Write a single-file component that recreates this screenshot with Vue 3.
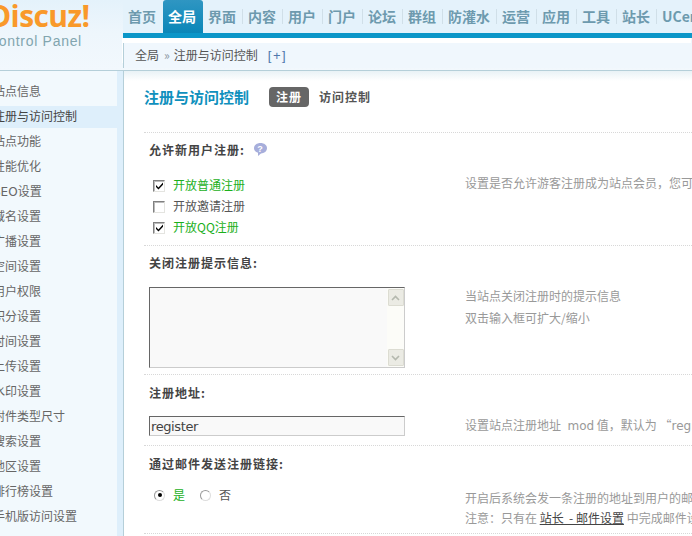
<script setup>
const navItems = ['首页', '全局', '界面', '内容', '用户', '门户', '论坛', '群组', '防灌水', '运营', '应用', '工具', '站长', 'UCenter']
const menu = ['站点信息', '注册与访问控制', '站点功能', '性能优化', 'SEO设置', '域名设置', '广播设置', '空间设置', '用户权限', '积分设置', '时间设置', '上传设置', '水印设置', '附件类型尺寸', '搜索设置', '地区设置', '排行榜设置', '手机版访问设置']
const checks = [
  { label: '开放普通注册', on: true },
  { label: '开放邀请注册', on: false },
  { label: '开放QQ注册', on: true }
]
</script>

<template>
  <div class="page">
    <header class="top">
      <div class="logo">
        <div class="brand">Discuz!</div>
        <div class="sub">Control Panel</div>
      </div>
      <div class="topright">
        <nav class="nav">
          <a v-for="(n, i) in navItems" :key="n" class="navitem" :class="{ active: i === 1, sep: i > 1 && i < 13 }">{{ n }}</a>
        </nav>
        <div class="rule"></div>
        <div class="crumbs">
          <span>全局</span><span class="raquo">»</span><span>注册与访问控制</span><span class="plus">[+]</span>
        </div>
      </div>
    </header>

    <div class="body">
      <aside class="side">
        <ul class="menu">
          <li v-for="(m, i) in menu" :key="m" :class="{ cur: i === 1 }">{{ m }}</li>
        </ul>
      </aside>

      <main class="main">
        <div class="head">
          <h1>注册与访问控制</h1>
          <span class="pill">注册</span>
          <span class="tab2">访问控制</span>
        </div>

        <section class="group g1">
          <div class="label">允许新用户注册:
            <svg class="help" width="15" height="15" viewBox="0 0 15 15">
              <path d="M7.500 1C11.200 1 14 3.200 14 6.200c0 3-2.800 5.200-6 5.200l-3 2.600v-3.200C2.400 9.800 1 8.200 1 6.200 1 3.200 3.800 1 7.500 1z" fill="#a7aedb" />
              <text x="7.500" y="9.500" text-anchor="middle" class="q">?</text>
            </svg>
          </div>
          <div class="line">
            <div class="opts">
              <div v-for="c in checks" :key="c.label" class="opt" :class="{ on: c.on }">
                <span class="cb">
                  <svg v-if="c.on" width="9" height="9" viewBox="0 0 9 9"><path d="M1 4l2.500 2.500L8 1.500v2.300L3.500 8.500 1 6z" fill="#000" /></svg>
                </span>
                <span>{{ c.label }}</span>
              </div>
            </div>
            <div class="tip t1">设置是否允许游客注册成为站点会员，您可以根据站点需要进行设置</div>
          </div>
        </section>

        <section class="group g2">
          <div class="label">关闭注册提示信息:</div>
          <div class="line">
            <div class="ta">
              <div class="sb">
                <span class="sbtn"><svg width="9" height="6" viewBox="0 0 9 6"><path d="M1 5l3.500-3.500L8 5" fill="none" stroke="#b4b8ae" stroke-width="1.600" /></svg></span>
                <span class="sbtn"><svg width="9" height="6" viewBox="0 0 9 6"><path d="M1 1l3.500 3.500L8 1" fill="none" stroke="#b4b8ae" stroke-width="1.600" /></svg></span>
              </div>
            </div>
            <div class="tip t2">
              <div>当站点关闭注册时的提示信息</div>
              <div>双击输入框可扩大/缩小</div>
            </div>
          </div>
        </section>

        <section class="group g3">
          <div class="label">注册地址:</div>
          <div class="line">
            <div class="inp">register</div>
            <div class="tip t3">设置站点注册地址 <span class="lat">&nbsp;mod</span> 值，默认为 “<span class="lat">register</span>”</div>
          </div>
        </section>

        <section class="group g4">
          <div class="label">通过邮件发送注册链接:</div>
          <div class="line">
            <div class="radios">
              <span class="rd"><i class="dot"></i></span><span class="yes">是</span>
              <span class="rd r2"></span><span>否</span>
            </div>
            <div class="tip t4">
              <div>开启后系统会发一条注册的地址到用户的邮箱</div>
              <div>注意：只有在 <a class="link">站长&nbsp;&nbsp;-&nbsp;邮件设置</a> 中完成邮件设置后才有效</div>
            </div>
          </div>
        </section>
      </main>
    </div>
  </div>
</template>

<style>
html, body { margin: 0; padding: 0; background: #fff; overflow: hidden; }
</style>

<style scoped>
.page {
  width: 692px;
  height: 536px;
  overflow: hidden;
  font: 12px/1.2 "Noto Sans CJK SC", "Liberation Sans", sans-serif;
  color: #555;
  background: #fff;
}
.top {
  display: grid;
  grid-template-columns: 123px 1fr;
  height: 70px;
  border-bottom: 1px solid #b5cfd9;
  background: linear-gradient(#e4f2fb, #eef6fc 33px, #f2f8fd);
  box-sizing: content-box;
}
.logo { overflow: hidden; height: 70px; }
.brand {
  margin: -1px 0 0 -11px;
  font: bold 30px/34px "Open Sans", "Liberation Sans", sans-serif;
  letter-spacing: -0.600px;
  color: #f9992a;
}
.sub {
  margin: 0 0 0 -12px;
  font: 14px/17px "Liberation Sans", sans-serif;
  letter-spacing: 0.700px;
  color: #82a5af;
}
.topright { min-width: 0; }
.nav {
  display: flex;
  height: 33px;
  white-space: nowrap;
  background: #e4f2fb;
}
.navitem {
  padding: 0 7px 0 5px;
  font: bold 14px/33px "Noto Sans CJK SC", "Liberation Sans", sans-serif;
  color: #6d9aae;
}
.navitem.sep {
  background: linear-gradient(#d0dfe8, #d0dfe8) right 9px / 1px 15px no-repeat;
}
.navitem.active {
  color: #fff;
  background: linear-gradient(#2f96c2, #0a86b8);
  border-radius: 3px 3px 0 0;
}
.rule { height: 5px; background: #0b96c8; }
.crumbs {
  display: flex;
  align-items: center;
  height: 25px;
  margin-top: 5px;
  padding-left: 11px;
  background: #f0f7fd;
  border-left: 1px solid #b5cfd9;
  box-shadow: -1px -5px 0 0 #fff;
  color: #555;
}
.raquo { margin: 0 4px 0 5px; color: #8a96a0; }
.plus { margin-left: 10px; color: #4f78ac; font-family: "Liberation Sans", sans-serif; letter-spacing: 1.500px; font-size: 13px; }

.body { display: flex; height: 465px; }
.side {
  flex: none;
  width: 117px;
  padding-right: 6px;
  background: linear-gradient(#deeffb, #deeffb) right / 6px 100% no-repeat, #f2f9fd;
  border-right: 1px solid #b5cfd9;
  overflow: hidden;
}
.menu { list-style: none; margin: 10px 0 0; padding: 0; }
.menu li {
  height: 25px;
  text-indent: -7px;
  line-height: 22px;
  font-family: "DejaVu Sans", "Noto Sans CJK SC", sans-serif;
  white-space: nowrap;
  color: #666;
}
.menu li.cur { background: #deeffb; height: 22px; margin-bottom: 3px; color: #444; }

.main {
  flex: 1;
  min-width: 0;
  padding-left: 20px;
  background: linear-gradient(#e9f2f6, #fff 10px) -20px 0 / 120% 12px no-repeat;
}
.head {
  display: flex;
  align-items: center;
  height: 52px;
  padding-bottom: 9px;
  border-bottom: 1px dotted #d8d8d8;
  box-sizing: content-box;
}
.head h1 {
  margin: 0;
  width: 125px;
  font-size: 15px;
  font-weight: bold;
  color: #0f90bd;
}
.pill {
  width: 40px;
  height: 20px;
  margin-right: 10px;
  border-radius: 4px;
  background: #666;
  color: #fff;
  font-weight: bold;
  line-height: 20px;
  letter-spacing: 1px;
  text-align: center;
}
.tab2 { font-weight: bold; letter-spacing: 1px; color: #555; }

.group { border-bottom: 1px dotted #d8d8d8; padding-left: 5px; box-sizing: border-box; }
.label { display: flex; align-items: center; height: 15px; font-weight: bold; letter-spacing: 1px; color: #444; white-space: nowrap; }
.help { margin-left: 8px; margin-top: -2px; }
.q { font: bold 9px "Liberation Sans", sans-serif; fill: #fff; }
.line { display: grid; grid-template-columns: 316px 300px; }
.tip { color: #999; white-space: nowrap; }
.lat { font-family: "DejaVu Sans", sans-serif; }

.g1 { height: 113px; padding-top: 10px; }
.g1 .line { margin-top: 17px; }
.opt { display: flex; align-items: center; height: 21px; padding-left: 4px; color: #555; }
.opt.on { color: #1cb01c; }
.cb {
  display: flex;
  align-items: center;
  justify-content: center;
  width: 10px;
  height: 10px;
  margin-right: 8px;
  border: 1px solid #e4e4e0;
  border-top-color: #808080;
  border-left-color: #808080;
  background: #fff;
  box-shadow: inset 1px 1px 0 #bbb;
}
.t1 { padding-top: 1px; }

.g2 { height: 129px; padding-top: 10px; }
.g2 .line { margin-top: 16px; }
.ta {
  position: relative;
  width: 254px;
  height: 79px;
  border: 1px solid #ccc;
  border-top-color: #666;
  border-left-color: #666;
  background: #f9f9f9;
}
.sb {
  position: absolute;
  top: 0;
  right: 0;
  bottom: 0;
  width: 17px;
  display: flex;
  flex-direction: column;
  justify-content: space-between;
  align-items: center;
  padding: 1px 0;
  background: #fcfcf8;
  box-sizing: border-box;
}
.sbtn {
  display: flex;
  align-items: center;
  justify-content: center;
  width: 14px;
  height: 15px;
  background: #ebebe4;
  border: 1px solid #dcdcd2;
  border-radius: 1px;
}
.t2 { padding-top: 1px; }
.t2 div { height: 22px; line-height: 16px; }

.g3 { height: 71px; padding-top: 11px; }
.g3 .line { margin-top: 15px; }
.inp {
  width: 253px;
  height: 18px;
  padding-left: 1px;
  border: 1px solid #ccc;
  border-top-color: #666;
  border-left-color: #666;
  background: #f9f9f9;
  font: 13px/20px "DejaVu Sans", sans-serif;
  letter-spacing: -0.400px;
  color: #444;
}
.t3 { padding-top: 2px; }

.g4 { height: 88px; padding-top: 11px; }
.g4 .line { margin-top: 16px; }
.radios { display: flex; align-items: center; height: 14px; padding-left: 5px; align-self: start; color: #555; }
.rd {
  display: flex;
  align-items: center;
  justify-content: center;
  width: 9px;
  height: 9px;
  margin-right: 8px;
  border: 1px solid #999;
  border-right-color: #ddd;
  border-bottom-color: #ddd;
  border-radius: 50%;
  background: #fff;
}
.r2 { margin-left: 15px; }
.dot { width: 4px; height: 4px; border-radius: 50%; background: #000; }
.yes { color: #1cb01c; }
.t4 { margin-top: 0; }
.t4 div { height: 20px; line-height: 20px; }
.link { color: #444; text-decoration: underline; }
</style>
